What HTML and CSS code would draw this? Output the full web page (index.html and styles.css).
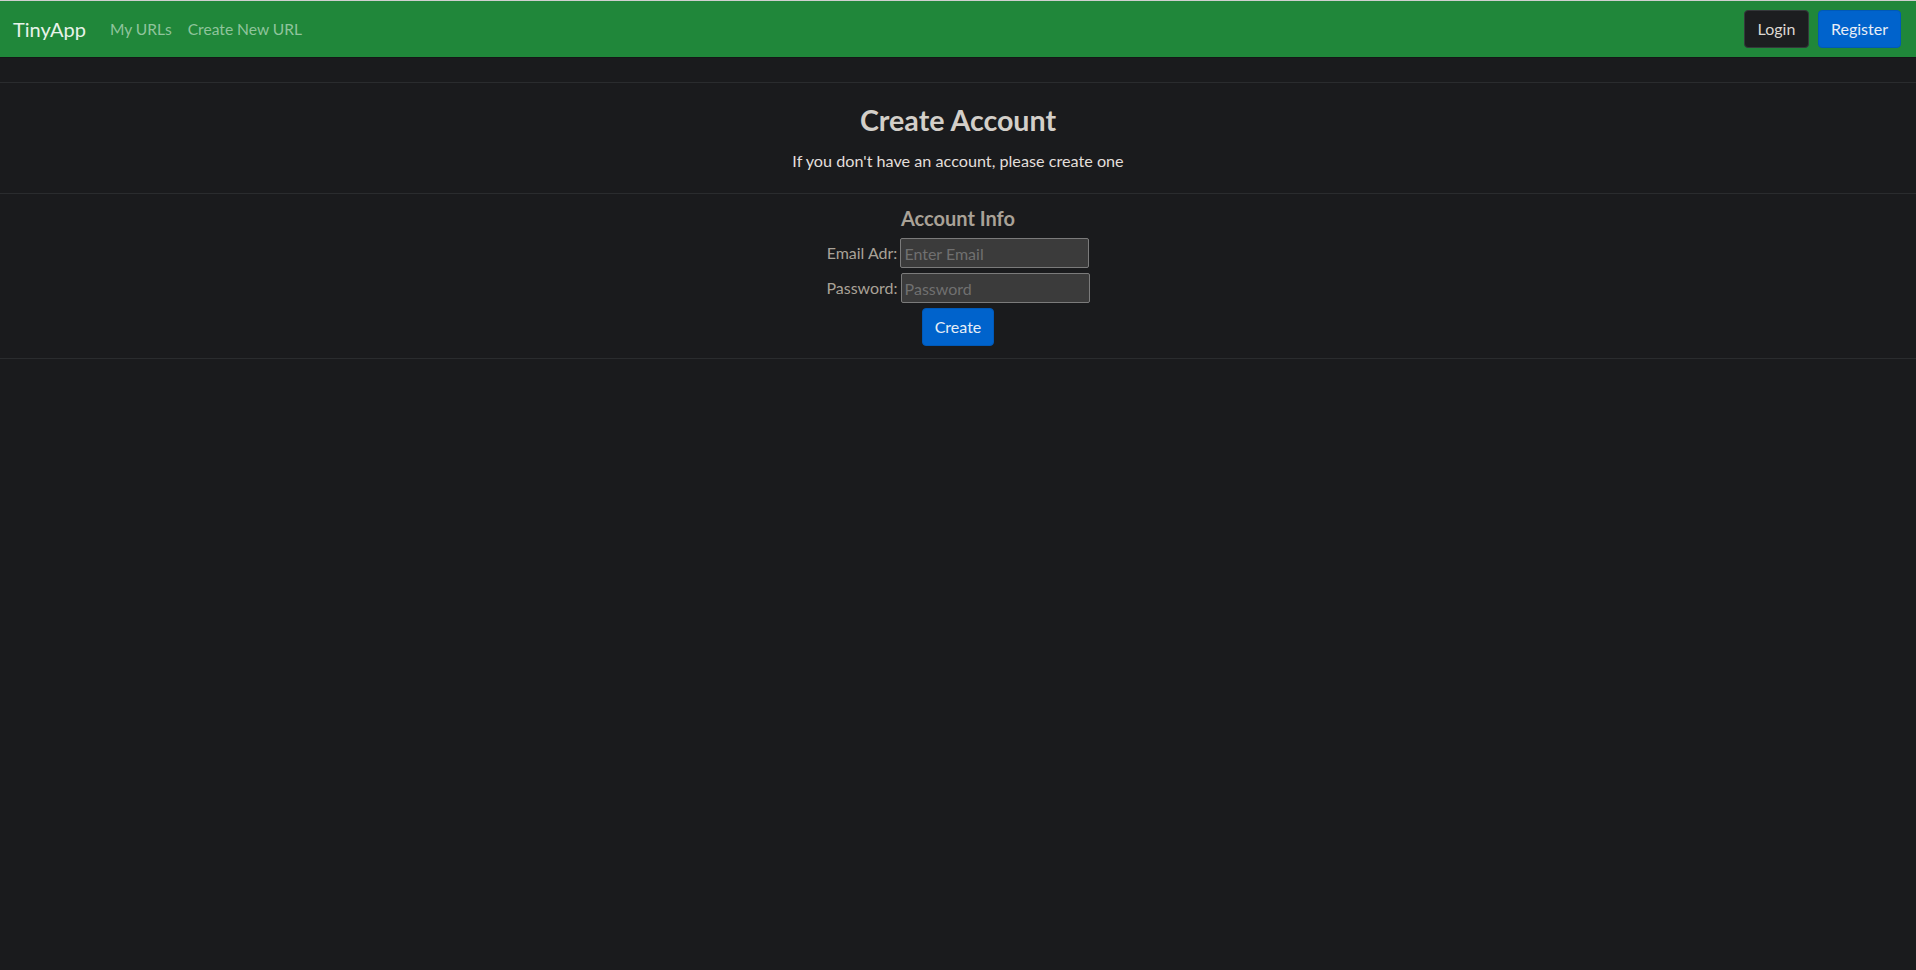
FILE: index.html
```html
<!DOCTYPE html>
<html lang="en">
<head>
<meta charset="utf-8">
<title>TinyApp</title>
<link rel="stylesheet" href="styles.css">
</head>
<body>
<nav class="navbar">
  <div class="nav-left">
    <a class="brand" href="#">TinyApp</a>
    <a class="nav-link" href="#">My URLs</a>
    <a class="nav-link" href="#">Create New URL</a>
  </div>
  <div class="nav-right">
    <button class="btn btn-dark" type="button">Login</button>
    <button class="btn btn-primary" type="button">Register</button>
  </div>
</nav>
<main class="main">
  <section class="intro">
    <h2 class="title">Create Account</h2>
    <p class="lead">If you don't have an account, please create one</p>
  </section>
  <section class="form-section">
    <h5 class="form-title">Account Info</h5>
    <form class="form">
      <div class="row">
        <label class="label" for="email">Email Adr:</label>
        <input class="input" id="email" type="text" placeholder="Enter Email">
      </div>
      <div class="row">
        <label class="label" for="password">Password:</label>
        <input class="input" id="password" type="password" placeholder="Password">
      </div>
      <div class="row">
        <button class="btn btn-primary" type="submit">Create</button>
      </div>
    </form>
  </section>
</main>
</body>
</html>
```
FILE: styles.css
```css
html, body {
  margin: 0;
  padding: 0;
}
body {
  background: #1a1b1d;
  font-family: Lato, "Liberation Sans", sans-serif;
  font-size: 16px;
  line-height: 24px;
  color: #e2dfdb;
  min-height: 970px;
  border-top: 1px solid #cfcfcf;
  box-sizing: border-box;
}
.navbar {
  display: flex;
  justify-content: space-between;
  align-items: center;
  background: #20873a;
  height: 56px;
  padding: 0 15px 0 13px;
  border-bottom: 1px solid #151617;
}
.nav-left {
  display: flex;
  align-items: center;
}
.brand {
  font-size: 20px;
  color: #e8f3ea;
  text-decoration: none;
  margin-right: 16px;
  line-height: 30px;
}
.nav-link {
  color: #8fc49c;
  text-decoration: none;
  padding: 0 8px;
  font-size: 15.6px;
}
.nav-right {
  display: flex;
  gap: 9px;
}
.btn {
  font-family: inherit;
  font-size: 16px;
  line-height: 24px;
  height: 38px;
  padding: 0 12px;
  border-radius: 4px;
  border: 1px solid transparent;
  cursor: pointer;
}
.btn-dark {
  background: #1c1e20;
  border-color: #35383b;
  color: #dcd8d2;
  width: 65px;
}
.btn-primary {
  background: #0063cc;
  border-color: #0059b8;
  color: #e8eef6;
}
.nav-right .btn-primary {
  width: 83px;
}
.main {
  margin-top: 24px;
}
.intro {
  border-top: 1px solid #2a2c2e;
  border-bottom: 1px solid #2a2c2e;
  padding: 20px 0 20px;
  text-align: center;
}
.title {
  margin: 0 0 11px;
  font-size: 28.6px;
  line-height: 35px;
  font-weight: 700;
  color: #d3cfc9;
}
.lead {
  margin: 0;
  color: #e2dfdb;
  font-size: 16.2px;
}
.form-section {
  border-bottom: 1px solid #2a2c2e;
  padding: 12px 0 12px;
  text-align: center;
}
.form-title {
  margin: 0 0 8px;
  font-size: 20px;
  line-height: 24px;
  font-weight: 700;
  color: #a9a297;
}
.form {
  display: flex;
  flex-direction: column;
  gap: 5px;
  align-items: center;
}
.row {
  display: flex;
  align-items: center;
  justify-content: center;
}
.label {
  color: #a9a297;
  margin-right: 3px;
}
.input {
  width: 189px;
  height: 30px;
  box-sizing: border-box;
  background: #3b3b3b;
  border: 1px solid #7b7b7b;
  border-radius: 2px;
  color: #e2dfdb;
  font-family: inherit;
  font-size: 16px;
  padding: 0 3px;
}
.input::placeholder {
  color: #707070;
}
.form .btn-primary {
  width: 72px;
  padding: 0;
}
```
